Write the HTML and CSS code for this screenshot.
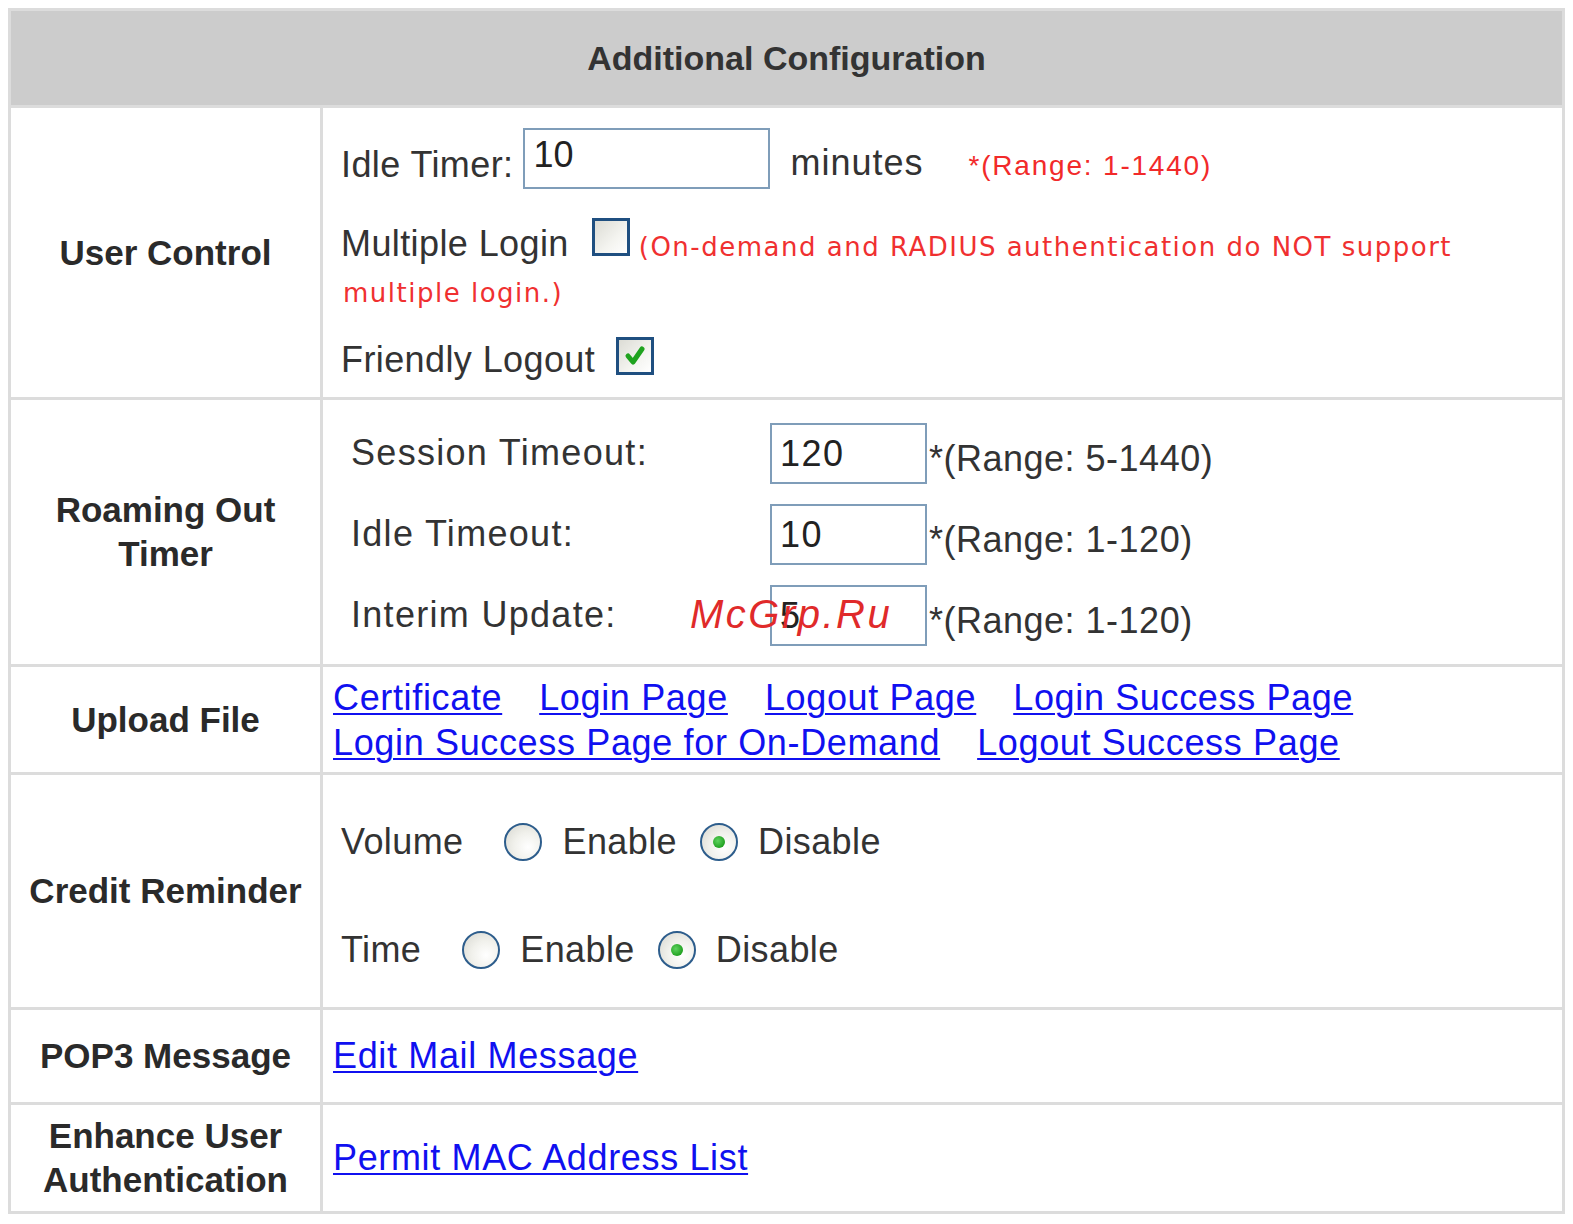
FILE: index.html
```html
<!DOCTYPE html>
<html>
<head>
<meta charset="utf-8">
<title>Additional Configuration</title>
<link rel="stylesheet" href="styles.css">
</head>
<body>
<table class="cfg">
  <colgroup><col class="c-lbl"><col class="c-val"></colgroup>
  <tr class="r-head"><th colspan="2" class="head">Additional Configuration</th></tr>
  <tr class="r-user">
    <th class="lbl">User Control</th>
    <td class="val uc">
      <div class="uc-a">
        <span class="txt">Idle Timer:</span>
        <span class="inp wide">10</span>
        <span class="txt minutes">minutes</span>
        <span class="red-range">*(Range: 1-1440)</span>
      </div>
      <div class="uc-b">
        <span class="txt">Multiple Login</span>
        <span class="cb"></span>
        <span class="note">(On-demand and RADIUS authentication do NOT support</span>
      </div>
      <div class="uc-c"><span class="note">multiple login.)</span></div>
      <div class="uc-d">
        <span class="txt">Friendly Logout</span>
        <span class="cb on"><svg viewBox="0 0 32 32" width="32" height="32"><path d="M9 16 L14 22 L23 9" fill="none" stroke="#1fa31f" stroke-width="5" stroke-linecap="round" stroke-linejoin="round"/></svg></span>
      </div>
    </td>
  </tr>
  <tr class="r-roam">
    <th class="lbl">Roaming Out<br>Timer</th>
    <td class="val ro">
      <div class="ro-line"><span class="txt ro-l">Session Timeout:</span><span class="inp small">120</span><span class="txt ro-r">*(Range: 5-1440)</span></div>
      <div class="ro-line"><span class="txt ro-l">Idle Timeout:</span><span class="inp small">10</span><span class="txt ro-r">*(Range: 1-120)</span></div>
      <div class="ro-line"><span class="txt ro-l">Interim Update:</span><span class="inp small">5</span><span class="txt ro-r">*(Range: 1-120)</span></div>
    </td>
  </tr>
  <tr class="r-upload">
    <th class="lbl">Upload File</th>
    <td class="val links">
      <div class="link-line">
        <a href="#">Certificate</a>
        <a href="#">Login Page</a>
        <a href="#">Logout Page</a>
        <a href="#">Login Success Page</a>
      </div>
      <div class="link-line">
        <a href="#">Login Success Page for On-Demand</a>
        <a href="#">Logout Success Page</a>
      </div>
    </td>
  </tr>
  <tr class="r-credit">
    <th class="lbl nowrap">Credit Reminder</th>
    <td class="val cr">
      <div class="cr-line">
        <span class="txt cr-l">Volume</span>
        <span class="radio"></span><span class="txt cr-opt">Enable</span>
        <span class="radio on"></span><span class="txt">Disable</span>
      </div>
      <div class="cr-line">
        <span class="txt cr-l">Time</span>
        <span class="radio"></span><span class="txt cr-opt">Enable</span>
        <span class="radio on"></span><span class="txt">Disable</span>
      </div>
    </td>
  </tr>
  <tr class="r-pop">
    <th class="lbl">POP3 Message</th>
    <td class="val links"><a href="#">Edit Mail Message</a></td>
  </tr>
  <tr class="r-enh">
    <th class="lbl">Enhance User<br>Authentication</th>
    <td class="val links"><a href="#">Permit MAC Address List</a></td>
  </tr>
</table>
<div class="watermark">McGrp.Ru</div>
</body>
</html>
```

FILE: styles.css
```css
html, body {
  background: #ffffff;
}
body {
  margin: 0;
  padding: 8px;
  font-family: "Liberation Sans", Arial, sans-serif;
  color: #333333;
  position: relative;
}

.cfg {
  border-collapse: collapse;
  width: 1557px;
  border: 3px solid #d9d9d9;
  table-layout: fixed;
}
.c-lbl { width: 312px; }
.cfg th, .cfg td {
  border: 3px solid #dcdcdc;
  padding: 0;
}

.cfg .head {
  height: 94px;
  background: #cccccc;
  font-size: 34px;
  font-weight: bold;
  color: #333333;
  text-align: center;
}

.cfg .lbl {
  font-size: 35px;
  font-weight: bold;
  color: #2a2a2a;
  text-align: center;
  line-height: 44px;
}
.nowrap { white-space: nowrap; }

.cfg .val {
  vertical-align: middle;
  font-size: 36px;
  color: #333333;
}

.r-user th { height: 289px; }
.r-roam th { height: 264px; }
.r-upload th { height: 105px; }
.r-credit th { height: 232px; }
.r-pop th { height: 92px; }
.r-enh th { height: 106px; }

.txt { white-space: nowrap; flex: none; letter-spacing: 0.4px; }

.inp {
  display: inline-flex;
  align-items: center;
  flex: none;
  box-sizing: border-box;
  border: 2px solid #7f9db9;
  background: #ffffff;
  color: #222222;
  font-size: 36px;
  padding-left: 8px;
}
.inp.wide { width: 247px; height: 61px; padding-bottom: 8px; }
.inp.small { width: 157px; height: 61px; letter-spacing: 1.5px; }

/* User control */
.cfg .uc { vertical-align: top; padding-left: 18px; }
.uc-a {
  display: flex;
  align-items: center;
  margin-top: 20px;
  height: 61px;
}
.uc-a .txt { padding-top: 12px; }
.uc-a .inp { margin-left: 10px; }
.uc-a .minutes { margin-left: 20px; padding-top: 8px; letter-spacing: 1px; }
.red-range {
  flex: none;
  margin-left: 45px;
  padding-top: 14px;
  color: #f22a2a;
  font-size: 28px;
  letter-spacing: 1.8px;
  white-space: nowrap;
}
.uc-b {
  display: flex;
  align-items: baseline;
  margin-top: 29px;
  line-height: 1;
}
.cb {
  display: inline-flex;
  align-items: center;
  justify-content: center;
  flex: none;
  box-sizing: border-box;
  width: 38px;
  height: 38px;
  border: 3px solid #1f4f80;
  background: linear-gradient(135deg, #dcdcd5 0%, #f4f4f0 60%, #ffffff 100%);
  margin-left: 23px;
}
.uc-b .note { margin-left: 9px; }
.note {
  flex: none;
  color: #f03030;
  font-family: "DejaVu Sans", Verdana, sans-serif;
  font-size: 26px;
  letter-spacing: 1.5px;
  white-space: nowrap;
}
.uc-c {
  line-height: 30px;
  margin-top: 13px;
  padding-left: 2px;
}
.uc-d {
  display: flex;
  align-items: baseline;
  margin-top: 29px;
  line-height: 1;
}
.uc-d .cb { margin-left: 21px; }

/* Roaming */
.cfg .ro { padding-left: 28px; padding-top: 5px; }
.ro-line {
  display: flex;
  align-items: center;
  height: 61px;
}
.ro-line + .ro-line { margin-top: 20px; }
.ro-l { width: 419px; padding-bottom: 2px; letter-spacing: 1.3px; }
.ro-r { margin-left: 2px; padding-top: 10px; font-size: 36px; letter-spacing: 0.5px; }

/* Links */
.cfg .links { padding-left: 10px; }
.links a {
  color: #1010f0;
  text-decoration: underline;
  text-decoration-thickness: 2px;
  text-underline-offset: 3px;
  font-size: 36px;
  letter-spacing: 0.65px;
  white-space: nowrap;
}
.link-line {
  display: flex;
  gap: 37px;
  line-height: 45px;
}

/* Credit reminder */
.cfg .cr { padding-left: 18px; padding-top: 9px; }
.cr-line {
  display: flex;
  align-items: center;
  height: 40px;
}
.cr-line + .cr-line { margin-top: 68px; }
.cr-l { margin-right: 41px; }
.cr-opt { margin-right: 23px; }
.radio {
  position: relative;
  display: inline-block;
  box-sizing: border-box;
  width: 38px;
  height: 38px;
  border-radius: 50%;
  border: 2px solid #2d5d8c;
  background: radial-gradient(circle at 65% 65%, #ffffff 0%, #f1f1ec 45%, #d6d6cf 100%);
  margin-right: 20px;
  flex: none;
}
.radio.on::after {
  content: "";
  position: absolute;
  left: 50%;
  top: 50%;
  width: 12px;
  height: 12px;
  margin: -6px 0 0 -6px;
  border-radius: 50%;
  background: radial-gradient(circle at 40% 40%, #5fd35f 0%, #21a121 70%);
}

.watermark {
  position: absolute;
  left: 690px;
  top: 592px;
  color: #e02a2a;
  font-family: "Liberation Sans", Arial, sans-serif;
  font-style: italic;
  font-size: 40px;
  letter-spacing: 2.5px;
  white-space: nowrap;
}
```
